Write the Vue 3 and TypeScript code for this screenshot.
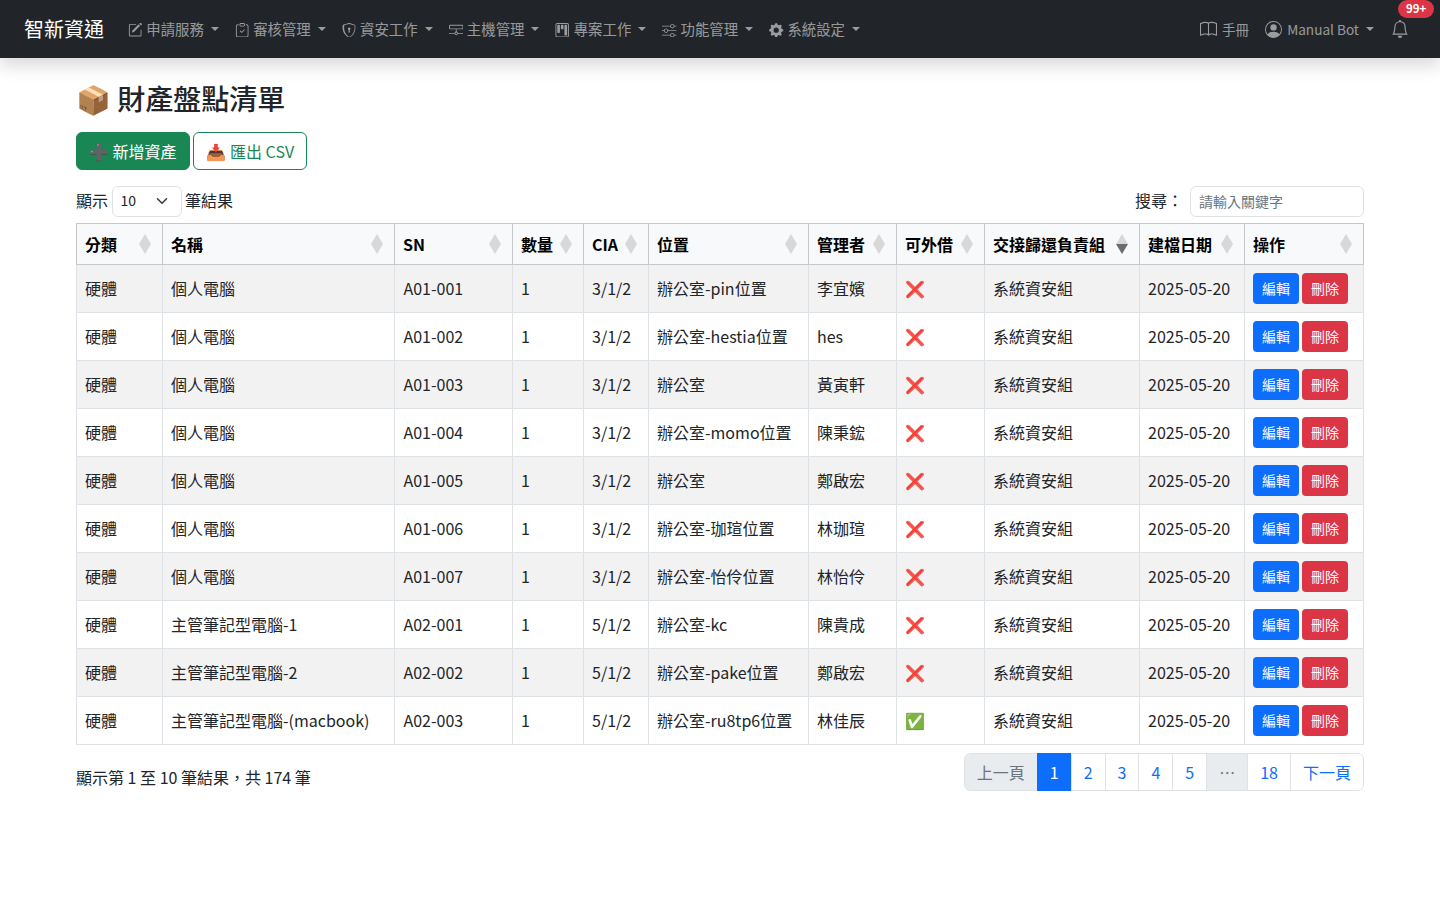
<template>
  <nav class="navbar">
    <a class="brand">智新資通</a>
    <ul class="nav-left">
      <li v-for="item in navItems" :key="item.label" class="nav-item">
        <svg class="nav-icon" viewBox="0 0 16 16" fill="currentColor" v-html="item.icon"></svg>
        <span>{{ item.label }}</span>
        <i class="caret"></i>
      </li>
    </ul>
    <div class="nav-right">
      <div class="nav-item">
        <svg class="nav-icon big" viewBox="0 0 16 16" fill="currentColor">
          <path fill-rule="evenodd" d="M1 2.83v9.87c.96-.37 2.2-.73 3.4-.85 1.2-.12 2.3 0 3.1.43V2.540c-.6-.6-1.700-.7-2.800-.580-1.130.120-2.330.440-3.300.870zM8.500 2.540v9.740c.8-.430 1.900-.550 3.100-.430 1.200.120 2.440.480 3.400.850V2.830c-.970-.430-2.170-.750-3.300-.870-1.100-.120-2.600-.020-3.200.580zM8 1.500C7 .7 5.600.6 4.300.740 2.900.880 1.500 1.330.300 1.870A.5.5 0 0 0 0 2.330v11a.5.5 0 0 0 .7.450c1.100-.5 2.500-.950 3.800-1.080 1.300-.130 2.400.080 3.100.950a.5.5 0 0 0 .8 0c.7-.870 1.800-1.080 3.100-.950 1.300.130 2.700.580 3.800 1.080a.5.5 0 0 0 .7-.450v-11a.5.5 0 0 0-.300-.460c-1.200-.540-2.600-.990-4-1.130C10.400.600 9 .700 8 1.500z" />
        </svg>
        <span>手冊</span>
      </div>
      <div class="nav-item user">
        <svg class="nav-icon user-icon" viewBox="0 0 16 16" fill="currentColor">
          <path d="M11 6a3 3 0 1 1-6 0 3 3 0 0 1 6 0z" />
          <path fill-rule="evenodd" d="M0 8a8 8 0 1 1 16 0A8 8 0 0 1 0 8zm8-7a7 7 0 0 0-5.47 11.37C3.24 11.23 4.85 10 8 10s4.76 1.23 5.47 2.37A7 7 0 0 0 8 1z" />
        </svg>
        <span>Manual Bot</span>
        <i class="caret"></i>
      </div>
      <div class="bell">
        <svg viewBox="0 0 16 16" fill="currentColor" width="18" height="18">
          <path d="M8 16a2 2 0 0 0 2-2H6a2 2 0 0 0 2 2zM8 1.92l-.8.16A4 4 0 0 0 4 6c0 .63-.13 2.2-.46 3.74-.16.77-.38 1.57-.66 2.26h10.24c-.28-.69-.5-1.49-.66-2.26C12.13 8.2 12 6.63 12 6a4 4 0 0 0-3.2-3.92L8 1.92zM14.22 12c.22.44.48.79.78 1H1c.3-.21.56-.56.78-1C2.68 10.2 3 6.88 3 6c0-2.42 1.72-4.44 4-4.9a1 1 0 1 1 2 0A5 5 0 0 1 13 6c0 .88.32 4.2 1.22 6z" />
        </svg>
        <span class="badge">99+</span>
      </div>
    </div>
  </nav>

  <main class="container">
    <h2 class="title"><span class="emoji">📦</span> 財產盤點清單</h2>
    <div class="actions">
      <button type="button" class="btn-add"><span class="emoji">➕</span> 新增資產</button>
      <button type="button" class="btn-export"><span class="emoji">📥</span> 匯出 CSV</button>
    </div>

    <div class="table-top">
      <label class="length">
        <span class="label-text">顯示</span>
        <span class="select">10
          <svg viewBox="0 0 16 16" width="16" height="12" fill="none" stroke="#343a40" stroke-width="2" stroke-linecap="round" stroke-linejoin="round"><path d="m2 5 6 6 6-6" /></svg>
        </span>
        <span class="label-text">筆結果</span>
      </label>
      <label class="search">
        <span class="label-text">搜尋：</span>
        <input type="text" placeholder="請輸入關鍵字">
      </label>
    </div>

    <table class="assets">
      <colgroup>
        <col v-for="w in colWidths" :key="w.key" :style="{ width: w.width + 'px' }">
      </colgroup>
      <thead>
        <tr>
          <th v-for="(h, i) in headers" :key="h">
            {{ h }}
            <span class="sort" :class="{ active: i === 8 }"><i class="up"></i><i class="down"></i></span>
          </th>
        </tr>
      </thead>
      <tbody>
        <tr v-for="row in rows" :key="row.sn">
          <td>硬體</td>
          <td>{{ row.name }}</td>
          <td class="sn">{{ row.sn }}</td>
          <td>1</td>
          <td>{{ row.cia }}</td>
          <td>{{ row.place }}</td>
          <td>{{ row.owner }}</td>
          <td class="flag"><span class="emoji">{{ row.lend ? '✅' : '❌' }}</span></td>
          <td>系統資安組</td>
          <td>2025-05-20</td>
          <td class="ops">
            <button type="button" class="btn-edit">編輯</button>
            <button type="button" class="btn-del">刪除</button>
          </td>
        </tr>
      </tbody>
    </table>

    <div class="table-bottom">
      <div class="info">顯示第 1 至 10 筆結果，共 174 筆</div>
      <ul class="pagination">
        <li class="muted">上一頁</li>
        <li class="current">1</li>
        <li>2</li>
        <li>3</li>
        <li>4</li>
        <li>5</li>
        <li class="muted">…</li>
        <li>18</li>
        <li>下一頁</li>
      </ul>
    </div>
  </main>
</template>

<script setup lang="ts">
interface Asset {
  name: string
  sn: string
  cia: string
  place: string
  owner: string
  lend: boolean
}

const navItems = [
  {
    label: '申請服務',
    icon: '<path d="M15.5 1.1a.5.5 0 0 1 0 .7l-1 1-2-2 1-1a.5.5 0 0 1 .7 0l1.3 1.3zm-1.7 2.4-2-2L5 8.3a.5.5 0 0 0-.1.2l-.6 1.8a.25.25 0 0 0 .3.3l1.8-.6a.5.5 0 0 0 .2-.1l6.9-6.9z"/><path fill-rule="evenodd" d="M1 13.5A1.5 1.5 0 0 0 2.5 15h11a1.5 1.5 0 0 0 1.5-1.5v-6h-1v6a.5.5 0 0 1-.5.5h-11a.5.5 0 0 1-.5-.5v-11a.5.5 0 0 1 .5-.5H9V1H2.5A1.5 1.5 0 0 0 1 2.5v11z"/>',
  },
  {
    label: '審核管理',
    icon: '<path fill-rule="evenodd" d="M10.85 7.85a.5.5 0 0 0-.7-.7L7.5 9.79 6.35 8.65a.5.5 0 1 0-.7.7l1.5 1.5a.5.5 0 0 0 .7 0l3-3z"/><path d="M4 1.5H3a2 2 0 0 0-2 2V14a2 2 0 0 0 2 2h10a2 2 0 0 0 2-2V3.5a2 2 0 0 0-2-2h-1v1h1a1 1 0 0 1 1 1V14a1 1 0 0 1-1 1H3a1 1 0 0 1-1-1V3.5a1 1 0 0 1 1-1h1v-1z"/><path d="M9.5 1a.5.5 0 0 1 .5.5v1a.5.5 0 0 1-.5.5h-3a.5.5 0 0 1-.5-.5v-1a.5.5 0 0 1 .5-.5h3zm-3-1A1.5 1.5 0 0 0 5 1.5v1A1.5 1.5 0 0 0 6.500 4h3A1.5 1.5 0 0 0 11 2.500v-1A1.5 1.5 0 0 0 9.500 0h-3z"/>',
  },
  {
    label: '資安工作',
    icon: '<path d="M5.34 1.8A27 27 0 0 0 2.8 2.6a.48.48 0 0 0-.33.39C1.9 7.3 3.2 10.4 4.8 12.500a11.600 11.600 0 0 0 2.5 2.400c.3.2.56.36.72.43.08.04.14.06.2.07.05 0 .1-.03.2-.07.16-.07.42-.22.72-.43a11.600 11.600 0 0 0 2.500-2.400c1.600-2.100 2.900-5.200 2.300-9.500a.48.48 0 0 0-.33-.39 27 27 0 0 0-2.540-.8C9.600 1.500 8.600 1.100 8 1.100s-1.600.4-2.660.7zM5.070.8C6.100.5 7.300 0 8 0s1.900.5 2.930.8c1.100.3 2.200.65 2.860.86.5.16.9.6.97 1.100.6 4.600-.8 8-2.500 10.300a12.600 12.600 0 0 1-2.800 2.600c-.35.240-.7.440-.97.560-.25.110-.5.180-.49.180s-.24-.07-.49-.18a6 6 0 0 1-.97-.560 12.600 12.600 0 0 1-2.800-2.600C1.540 10.800.14 7.400.74 2.800c.07-.5.470-.940.970-1.100.660-.210 1.760-.560 2.860-.900z"/><path d="M9.500 6.500a1.500 1.500 0 0 1-1 1.415l.385 1.990a.5.5 0 0 1-.491.595h-.788a.5.5 0 0 1-.49-.595l.384-1.990A1.500 1.500 0 1 1 9.500 6.500z"/>',
  },
  {
    label: '主機管理',
    icon: '<path d="M0 3.500A1.500 1.500 0 0 1 1.500 2h13A1.500 1.500 0 0 1 16 3.500v2A1.500 1.500 0 0 1 14.500 7h-13A1.500 1.500 0 0 1 0 5.500v-2zM1.500 3a.5.5 0 0 0-.5.5v2a.5.5 0 0 0 .5.5h13a.5.5 0 0 0 .5-.5v-2a.5.5 0 0 0-.5-.5h-13z"/><path d="M7.500 7h1v3h-1zM0 11h6.200v1H0zM9.800 11H16v1H9.800z"/><path d="M8 9.500a2 2 0 1 1 0 4 2 2 0 0 1 0-4zm0 1a1 1 0 1 0 0 2 1 1 0 0 0 0-2z"/>',
  },
  {
    label: '專案工作',
    icon: '<path d="M13.500 1a1 1 0 0 1 1 1v12a1 1 0 0 1-1 1h-11a1 1 0 0 1-1-1V2a1 1 0 0 1 1-1h11zm-11-1a2 2 0 0 0-2 2v12a2 2 0 0 0 2 2h11a2 2 0 0 0 2-2V2a2 2 0 0 0-2-2h-11z"/><path d="M6.500 3a1 1 0 0 1 1-1h1a1 1 0 0 1 1 1v3a1 1 0 0 1-1 1h-1a1 1 0 0 1-1-1V3zm-4 0a1 1 0 0 1 1-1h1a1 1 0 0 1 1 1v7a1 1 0 0 1-1 1h-1a1 1 0 0 1-1-1V3zm8 0a1 1 0 0 1 1-1h1a1 1 0 0 1 1 1v10a1 1 0 0 1-1 1h-1a1 1 0 0 1-1-1V3z"/>',
  },
  {
    label: '功能管理',
    icon: '<path fill-rule="evenodd" d="M11.500 2a1.500 1.500 0 1 0 0 3 1.500 1.500 0 0 0 0-3zM9.050 3a2.500 2.500 0 0 1 4.900 0H16v1h-2.050a2.500 2.500 0 0 1-4.900 0H0V3h9.050zM4.500 7a1.500 1.500 0 1 0 0 3 1.500 1.500 0 0 0 0-3zM2.050 8a2.500 2.500 0 0 1 4.900 0H16v1H6.950a2.500 2.500 0 0 1-4.900 0H0V8h2.050zm9.450 4a1.500 1.500 0 1 0 0 3 1.500 1.500 0 0 0 0-3zm-2.450 1a2.500 2.500 0 0 1 4.900 0H16v1h-2.050a2.500 2.500 0 0 1-4.900 0H0v-1h9.050z"/>',
  },
  {
    label: '系統設定',
    icon: '<path d="M9.405 1.050c-.413-1.400-2.397-1.400-2.810 0l-.1.340a1.464 1.464 0 0 1-2.105.872l-.310-.170c-1.283-.698-2.686.705-1.987 1.987l.169.311c.446.820.023 1.841-.872 2.105l-.340.100c-1.400.413-1.400 2.397 0 2.810l.340.100a1.464 1.464 0 0 1 .872 2.105l-.170.310c-.698 1.283.705 2.686 1.987 1.987l.311-.169a1.464 1.464 0 0 1 2.105.872l.100.340c.413 1.400 2.397 1.400 2.810 0l.100-.340a1.464 1.464 0 0 1 2.105-.872l.310.170c1.283.698 2.686-.705 1.987-1.987l-.169-.311a1.464 1.464 0 0 1 .872-2.105l.340-.100c1.400-.413 1.400-2.397 0-2.810l-.340-.100a1.464 1.464 0 0 1-.872-2.105l.170-.310c.698-1.283-.705-2.686-1.987-1.987l-.311.169a1.464 1.464 0 0 1-2.105-.872l-.100-.340zM8 10.930a2.929 2.929 0 1 1 0-5.860 2.929 2.929 0 0 1 0 5.858z"/>',
  },
]

const headers = ['分類', '名稱', 'SN', '數量', 'CIA', '位置', '管理者', '可外借', '交接歸還負責組', '建檔日期', '操作']

const colWidths = [86, 232, 118, 71, 65, 160, 88, 88, 155, 105, 119].map((width, key) => ({ key, width }))

const rows: Asset[] = [
  { name: '個人電腦', sn: 'A01-001', cia: '3/1/2', place: '辦公室-pin位置', owner: '李宜嬪', lend: false },
  { name: '個人電腦', sn: 'A01-002', cia: '3/1/2', place: '辦公室-hestia位置', owner: 'hes', lend: false },
  { name: '個人電腦', sn: 'A01-003', cia: '3/1/2', place: '辦公室', owner: '黃寅軒', lend: false },
  { name: '個人電腦', sn: 'A01-004', cia: '3/1/2', place: '辦公室-momo位置', owner: '陳秉鋐', lend: false },
  { name: '個人電腦', sn: 'A01-005', cia: '3/1/2', place: '辦公室', owner: '鄭啟宏', lend: false },
  { name: '個人電腦', sn: 'A01-006', cia: '3/1/2', place: '辦公室-珈瑄位置', owner: '林珈瑄', lend: false },
  { name: '個人電腦', sn: 'A01-007', cia: '3/1/2', place: '辦公室-怡伶位置', owner: '林怡伶', lend: false },
  { name: '主管筆記型電腦-1', sn: 'A02-001', cia: '5/1/2', place: '辦公室-kc', owner: '陳貴成', lend: false },
  { name: '主管筆記型電腦-2', sn: 'A02-002', cia: '5/1/2', place: '辦公室-pake位置', owner: '鄭啟宏', lend: false },
  { name: '主管筆記型電腦-(macbook)', sn: 'A02-003', cia: '5/1/2', place: '辦公室-ru8tp6位置', owner: '林佳辰', lend: true },
]
</script>

<style>
body {
  font-family: "Noto Sans CJK TC", "Noto Sans", sans-serif;
  font-size: 16px;
  line-height: 1.5;
  color: #212529;
  background: #fff;
}
</style>

<style scoped>
.navbar {
  display: flex;
  align-items: center;
  height: 58px;
  padding: 0 24px;
  background: #212529;
  box-shadow: 0 8px 16px rgba(0, 0, 0, 0.15);
  position: relative;
  color: rgba(255, 255, 255, 0.55);
  font-size: 14.4px;
}

.brand {
  color: #fff;
  font-size: 20px;
  margin-right: 24px;
}

.nav-left {
  display: flex;
  list-style: none;
  margin: 0;
  padding: 0;
  gap: 16px;
}

.nav-item {
  display: flex;
  align-items: center;
  white-space: nowrap;
}

.nav-icon {
  width: 14.4px;
  height: 14.4px;
  margin-right: 3.9px;
  margin-top: 2px;
}

.nav-icon.big {
  width: 17px;
  height: 17px;
  margin-right: 5px;
}

.user-icon {
  width: 17px;
  height: 17px;
  margin-right: 5px;
}

.nav-right {
  display: flex;
  align-items: center;
  margin-left: auto;
  gap: 16px;
  font-size: 13.6px;
}

.caret {
  display: block;
  margin-left: 7px;
  border-top: 4px solid currentColor;
  border-left: 4px solid transparent;
  border-right: 4px solid transparent;
}

.bell {
  position: relative;
  display: flex;
  margin-right: 7px;
  margin-left: 1px;
}

.badge {
  position: absolute;
  top: -20px;
  left: 7px;
  padding: 0 8px;
  height: 18px;
  border-radius: 9px;
  background: #dc3545;
  color: #fff;
  font-size: 11.5px;
  font-weight: 700;
  line-height: 17px;
}

.container {
  padding: 0 76px;
}

.title {
  margin: 0;
  padding-top: 18px;
  height: 74px;
  box-sizing: border-box;
  font-size: 28px;
  font-weight: 500;
  line-height: 45px;
}

.emoji {
  font-family: "Noto Color Emoji", sans-serif;
}

.actions {
  display: flex;
  gap: 3px;
  margin-bottom: 16px;
}

.actions button {
  height: 38px;
  padding: 1px 12px 0;
  border-radius: 6px;
  font: inherit;
  line-height: 24px;
}

.actions .btn-export {
  padding-left: 13px;
}

.btn-add {
  background: #198754;
  border: 1px solid #198754;
  color: #fff;
}

.btn-export {
  background: #fff;
  border: 1px solid #198754;
  color: #198754;
}

.table-top {
  display: flex;
  align-items: center;
  justify-content: space-between;
  height: 31px;
  margin-bottom: 6px;
}

.length {
  display: flex;
  align-items: center;
  gap: 4px;
}

.label-text {
  margin-bottom: 4px;
}

.select {
  display: flex;
  align-items: center;
  justify-content: space-between;
  box-sizing: border-box;
  width: 70px;
  height: 31px;
  margin-right: -1px;
  padding: 0 11px 2px 7.5px;
  border: 1px solid #dee2e6;
  border-radius: 6px;
  font-size: 14px;
}

.search {
  display: flex;
  align-items: center;
  gap: 7px;
}

.search input {
  box-sizing: border-box;
  width: 174px;
  height: 31px;
  padding: 0 8px 2px;
  border: 1px solid #dee2e6;
  border-radius: 6px;
  font: inherit;
  font-size: 14px;
  outline: none;
}

.search input::placeholder {
  color: #6c757d;
}

.assets {
  width: 1287px;
  table-layout: fixed;
  border-collapse: collapse;
}

.assets th,
.assets td {
  border: 1px solid #dee2e6;
  padding: 0 8px;
  text-align: left;
  white-space: nowrap;
  color: #212529;
}

.assets th {
  height: 40px;
  position: relative;
  background: #f8f9fa;
  border-color: #c6c7c8;
  font-weight: 700;
  color: #000;
}

.assets td {
  height: 45px;
  padding-bottom: 2px;
}

.assets td.sn {
  padding-left: 8.5px;
}

.assets td.flag,
.assets td.ops {
  height: 47px;
  padding-bottom: 0;
}

.assets tbody tr:nth-child(odd) td {
  background: #f2f2f2;
}

.sort {
  position: absolute;
  right: 11px;
  top: 50%;
  margin-top: -10px;
  display: flex;
  flex-direction: column;
  width: 12px;
}

.sort i {
  display: block;
  border-left: 6px solid transparent;
  border-right: 6px solid transparent;
}

.sort .up {
  border-bottom: 10px solid #d8d8d8;
}

.sort .down {
  border-top: 10px solid #d8d8d8;
}

.sort.active .down {
  border-top-color: #6b6b6b;
}

.ops {
  font-size: 0;
}

.ops button {
  height: 31px;
  width: 46px;
  padding: 0 0 2px;
  border: 0;
  border-radius: 4px;
  color: #fff;
  font-family: inherit;
  font-size: 14px;
  vertical-align: middle;
}

.btn-edit {
  background: #0d6efd;
  margin-right: 3px;
}

.btn-del {
  background: #dc3545;
}

.table-bottom {
  display: flex;
  justify-content: space-between;
  padding-top: 8px;
}

.info {
  padding-top: 12px;
}

.pagination {
  display: flex;
  list-style: none;
  margin: 0;
  padding: 0;
  height: 38px;
  border-radius: 6px;
  overflow: hidden;
  color: #0d6efd;
}

.pagination li {
  display: flex;
  align-items: center;
  box-sizing: border-box;
  padding: 0 12px;
  margin-left: -1px;
  border: 1px solid #dee2e6;
}

.pagination li:first-child {
  margin-left: 0;
  border-radius: 6px 0 0 6px;
}

.pagination li:last-child {
  border-radius: 0 6px 6px 0;
}

.pagination .muted {
  background: #e9ecef;
  color: #6c757d;
}

.pagination .current {
  background: #0d6efd;
  border-color: #0d6efd;
  color: #fff;
}
</style>
